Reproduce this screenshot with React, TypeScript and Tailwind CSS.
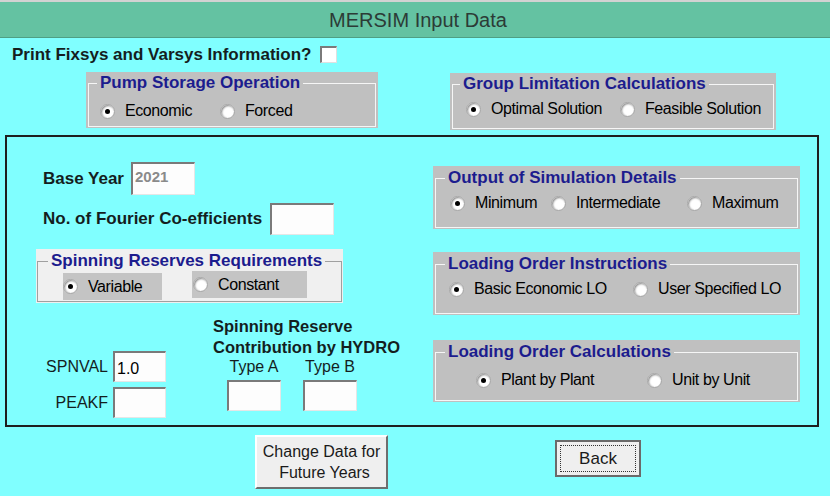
import React from "react";

type RadioProps = { checked?: boolean; label: string; className?: string };

const Radio = ({ checked, label, className = "" }: RadioProps) => (
  <div className={`flex items-center shrink-0 ${className}`}>
    <span className="w-[15px] h-[15px] rounded-full bg-white border border-[#a4a4a4] shadow-[inset_1px_1px_2px_#8a8a8a] flex items-center justify-center shrink-0">
      {checked && <span className="w-[5px] h-[5px] rounded-full bg-black" />}
    </span>
    <span className="ml-[10px] text-[16px] leading-[18px] tracking-[-0.4px] text-black whitespace-nowrap">{label}</span>
  </div>
);

type GroupProps = {
  title: string;
  outer: string;
  legend: string;
  children: React.ReactNode;
};

const Group = ({ title, outer, legend, children }: GroupProps) => (
  <div className={`flex flex-col bg-[#c0c0c0] px-[2px] pb-[1px] ${outer}`}>
    <fieldset className="flex-1 min-w-0 border border-[#f6f6f6]">
      <legend className={`px-[3px] text-[17px] leading-[20px] font-bold text-[#1c1c8e] ${legend}`}>{title}</legend>
      {children}
    </fieldset>
  </div>
);

const Input = ({ value = "", className = "", textClass = "" }: { value?: string; className?: string; textClass?: string }) => (
  <div
    className={`bg-[#fdfdfd] border-t-2 border-l-2 border-b border-r border-t-[#7a7a7a] border-l-[#7a7a7a] border-b-[#e6e6e6] border-r-[#e6e6e6] pl-[2px] ${className}`}
  >
    <span className={textClass}>{value}</span>
  </div>
);

export default function App() {
  return (
    <div className="w-[830px] h-[496px] overflow-hidden bg-[#80ffff] font-[Liberation_Sans,Arial,sans-serif] flex flex-col">
      {/* Title bar */}
      <div className="h-[38px] shrink-0 bg-[#64c2a2] border-t-2 border-t-[#d2d2d2] border-b border-b-[#4f9f85] flex items-center justify-center">
        <span className="text-[20px] leading-[24px] text-[#2c3b36] pl-[6px]">MERSIM Input Data</span>
      </div>

      {/* Print row */}
      <div className="mt-[8px] pl-[12px] flex items-center h-[17px]">
        <span className="text-[17px] leading-[20px] font-bold text-[#141e1e]">Print Fixsys and Varsys Information?</span>
        <span className="ml-[9px] w-[17px] h-[17px] bg-white border-t-2 border-l-2 border-b border-r border-t-[#7a7a7a] border-l-[#7a7a7a] border-b-[#e0e0e0] border-r-[#e0e0e0]" />
      </div>

      {/* Top groups */}
      <div className="mt-[9px] flex items-start">
        <Group title="Pump Storage Operation" outer="ml-[86px] w-[292px] h-[56px] pt-[1px]" legend="ml-[8px]">
          <div className="mt-[9px] ml-[11px] flex">
            <Radio checked label="Economic" className="w-[120px]" />
            <Radio label="Forced" />
          </div>
        </Group>
        <Group title="Group Limitation Calculations" outer="ml-[72px] mt-[1px] w-[326px] h-[57px] pt-[1px]" legend="ml-[7px]">
          <div className="mt-[6px] ml-[13px] flex">
            <Radio checked label="Optimal Solution" className="w-[154px]" />
            <Radio label="Feasible Solution" />
          </div>
        </Group>
      </div>

      {/* Main frame */}
      <div className="mt-[5px] ml-[5px] w-[814px] h-[292px] shrink-0 border-2 border-[#1e1e1e] flex">
        {/* Left column */}
        <div className="w-[426px] pl-[29px] flex flex-col">
          <div className="mt-[25px] ml-[7px] flex items-center">
            <span className="w-[88px] text-[17px] leading-[20px] font-bold text-[#141e1e]">Base Year</span>
            <Input value="2021" className="w-[64px] h-[33px] pt-[1px]" textClass="text-[15px] leading-[18px] font-bold text-[#8a8a8a]" />
          </div>
          <div className="mt-[8px] ml-[7px] flex items-center">
            <span className="w-[227px] text-[17px] leading-[20px] font-bold text-[#141e1e]">No. of Fourier Co-efficients</span>
            <Input className="w-[64px] h-[32px]" />
          </div>

          {/* Spinning reserves requirements */}
          <div className="mt-[14px] w-[307px] h-[54px] bg-[#f0f0f0] px-[1px] pt-[2px] pb-[1px] flex flex-col">
            <fieldset className="flex-1 min-w-0 border border-[#a0a0a0]">
              <legend className="ml-[10px] px-[3px] text-[17px] leading-[20px] font-bold text-[#1c1c8e]">
                Spinning Reserves Requirements
              </legend>
              <div className="flex items-start">
                <div className="ml-[25px] mt-[2px] w-[99px] h-[27px] bg-[#c4c4c4] flex items-center">
                  <Radio checked label="Variable" />
                </div>
                <div className="ml-[30px] w-[115px] h-[27px] bg-[#c4c4c4] flex items-center pl-[1px]">
                  <Radio label="Constant" />
                </div>
              </div>
            </fieldset>
          </div>

          {/* Bottom area */}
          <div className="flex items-start">
            <div className="mt-[48px] flex flex-col">
              <div className="flex items-center">
                <span className="w-[72px] text-right text-[16px] leading-[18px] text-[#141e1e]">SPNVAL</span>
                <Input value="1.0" className="ml-[5px] w-[53px] h-[31px] pt-[4px]" textClass="text-[16px] leading-[20px] text-black" />
              </div>
              <div className="mt-[5px] flex items-center">
                <span className="w-[72px] text-right text-[16px] leading-[18px] text-[#141e1e]">PEAKF</span>
                <Input className="ml-[5px] w-[53px] h-[31px]" />
              </div>
            </div>
            <div className="ml-[47px] mt-[13px] flex flex-col">
              <span className="text-[16.5px] leading-[21px] font-bold text-[#141e1e]">Spinning Reserve</span>
              <span className="text-[16.5px] leading-[21px] font-bold text-[#141e1e] whitespace-nowrap">Contribution by HYDRO</span>
              <div className="flex">
                <div className="ml-[14px] w-[54px] flex flex-col items-center">
                  <span className="text-[16px] leading-[18px] text-[#141e1e] whitespace-nowrap">Type A</span>
                  <Input className="mt-[4px] w-[54px] h-[31px]" />
                </div>
                <div className="ml-[22px] w-[54px] flex flex-col items-center">
                  <span className="text-[16px] leading-[18px] text-[#141e1e] whitespace-nowrap">Type B</span>
                  <Input className="mt-[4px] w-[54px] h-[31px]" />
                </div>
              </div>
            </div>
          </div>
        </div>

        {/* Right column */}
        <div className="w-[367px] pt-[29px] flex flex-col">
          <Group title="Output of Simulation Details" outer="w-[367px] h-[63px] pt-[2px]" legend="ml-[9px]">
            <div className="mt-[6px] ml-[14px] flex">
              <Radio checked label="Minimum" className="w-[101px]" />
              <Radio label="Intermediate" className="w-[136px]" />
              <Radio label="Maximum" />
            </div>
          </Group>
          <Group title="Loading Order Instructions" outer="mt-[23px] w-[367px] h-[63px] pt-[2px]" legend="ml-[9px]">
            <div className="mt-[6px] ml-[13px] flex">
              <Radio checked label="Basic Economic LO" className="w-[184px]" />
              <Radio label="User Specified LO" />
            </div>
          </Group>
          <Group title="Loading Order Calculations" outer="mt-[25px] w-[367px] h-[62px] pt-[2px]" legend="ml-[9px]">
            <div className="mt-[9px] ml-[40px] flex">
              <Radio checked label="Plant by Plant" className="w-[171px]" />
              <Radio label="Unit by Unit" />
            </div>
          </Group>
        </div>
      </div>

      {/* Bottom buttons */}
      <div className="mt-[8px] flex items-start">
        <div className="ml-[255px] w-[133px] h-[54px] bg-[#efefef] border-t-2 border-l-2 border-b-2 border-r-2 border-t-white border-l-white border-b-[#6e6e6e] border-r-[#6e6e6e] flex flex-col items-center justify-center">
          <span className="text-[16px] leading-[21px] text-[#1a1a1a]">Change Data for</span>
          <span className="text-[16px] leading-[21px] text-[#1a1a1a] pl-[6px]">Future Years</span>
        </div>
        <div className="ml-[167px] mt-[5px] w-[86px] h-[37px] bg-[#efefef] border-2 border-[#6a6a6a] p-[3px]">
          <div className="w-full h-full border border-dotted border-[#333] flex items-center justify-center">
            <span className="text-[17px] leading-[20px] text-[#1a1a1a]">Back</span>
          </div>
        </div>
      </div>
    </div>
  );
}
